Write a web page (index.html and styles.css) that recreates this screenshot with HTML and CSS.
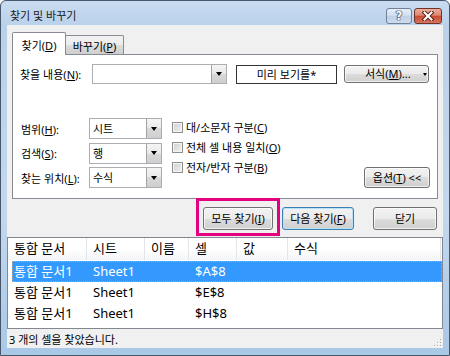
FILE: index.html
```html
<!DOCTYPE html>
<html lang="ko">
<head>
    <meta charset="UTF-8">
    <meta name="viewport" content="width=device-width, initial-scale=1.0">
    <title>찾기 및 바꾸기</title>
    <link rel="stylesheet" href="styles.css">
</head>
<body>
    <div class="window">
        <div class="titlebar">
            <span class="title">찾기 및 바꾸기</span>
            <div class="caption-buttons">
                <div class="cap-btn help">?</div>
                <div class="cap-btn close">
                    <svg width="14" height="10" viewBox="0 0 14 10">
                        <path d="M3.5 1.5 L10.5 8.5 M10.5 1.5 L3.5 8.5" stroke="#5b271d" stroke-width="4" stroke-linecap="square"/>
                        <path d="M3.5 1.5 L10.5 8.5 M10.5 1.5 L3.5 8.5" stroke="#fff" stroke-width="2" stroke-linecap="square"/>
                    </svg>
                </div>
            </div>
        </div>

        <div class="client">
            <div class="tabs">
                <div class="tab active">찾기(<u>D</u>)</div>
                <div class="tab">바꾸기(<u>P</u>)</div>
            </div>

            <div class="panel">
                <div class="find-row">
                    <span class="find-label">찾을 내용(<u>N</u>):</span>
                    <div class="combo find-combo"><span class="combo-text"></span><span class="combo-arrow"></span></div>
                    <div class="preview">미리 보기를*</div>
                    <button class="btn format-btn"><span>서식(<u>M</u>)...</span><span class="small-arrow"></span></button>
                </div>

                <div class="options">
                    <div class="option-fields">
                        <span>범위(<u>H</u>):</span>
                        <div class="combo"><span class="combo-text">시트</span><span class="combo-arrow"></span></div>
                        <span>검색(<u>S</u>):</span>
                        <div class="combo"><span class="combo-text">행</span><span class="combo-arrow"></span></div>
                        <span>찾는 위치(<u>L</u>):</span>
                        <div class="combo"><span class="combo-text">수식</span><span class="combo-arrow"></span></div>
                    </div>
                    <div class="checks">
                        <label class="check"><span class="box"></span><span>대/소문자 구분(<u>C</u>)</span></label>
                        <label class="check"><span class="box"></span><span>전체 셀 내용 일치(<u>O</u>)</span></label>
                        <label class="check"><span class="box"></span><span>전자/반자 구분(<u>B</u>)</span></label>
                    </div>
                    <button class="btn options-btn">옵션(<u>T</u>) &lt;&lt;</button>
                </div>
            </div>

            <div class="actions">
                <div class="highlight">
                    <button class="btn find-all">모두 찾기(<u>I</u>)</button>
                </div>
                <button class="btn default find-next">다음 찾기(<u>F</u>)</button>
                <button class="btn close-btn">닫기</button>
            </div>

            <div class="results">
                <div class="results-head">
                    <span>통합 문서</span>
                    <span>시트</span>
                    <span>이름</span>
                    <span>셀</span>
                    <span>값</span>
                    <span>수식</span>
                </div>
                <div class="result-row selected">
                    <span>통합 문서1</span><span>Sheet1</span><span></span><span>$A$8</span><span></span><span></span>
                </div>
                <div class="result-row">
                    <span>통합 문서1</span><span>Sheet1</span><span></span><span>$E$8</span><span></span><span></span>
                </div>
                <div class="result-row">
                    <span>통합 문서1</span><span>Sheet1</span><span></span><span>$H$8</span><span></span><span></span>
                </div>
            </div>

            <div class="status">
                3 개의 셀을 찾았습니다.
                <svg class="grip" width="10" height="10" viewBox="0 0 10 10">
                    <g fill="#fff">
                        <rect x="9" y="9" width="1" height="1"/><rect x="6" y="9" width="1" height="1"/><rect x="3" y="9" width="1" height="1"/>
                        <rect x="9" y="6" width="1" height="1"/><rect x="6" y="6" width="1" height="1"/><rect x="9" y="3" width="1" height="1"/>
                    </g>
                    <g fill="#a8a8a8">
                        <rect x="8" y="8" width="1" height="1"/><rect x="5" y="8" width="1" height="1"/><rect x="2" y="8" width="1" height="1"/>
                        <rect x="8" y="5" width="1" height="1"/><rect x="5" y="5" width="1" height="1"/><rect x="8" y="2" width="1" height="1"/>
                    </g>
                </svg>
            </div>
        </div>
    </div>
</body>
</html>
```

FILE: styles.css
```css
* {
    box-sizing: border-box;
}

body {
    margin: 0;
    font-family: "Noto Sans", "Noto Sans CJK KR", sans-serif;
    font-size: 11px;
    color: #000;
    background: #fff;
}

button {
    font: inherit;
    color: inherit;
    margin: 0;
    padding: 0;
}

u {
    text-underline-offset: 1px;
}

/* window frame */
.window {
    width: 450px;
    height: 356px;
    display: flex;
    flex-direction: column;
    padding: 0 6px 7px;
    border: 1px solid #46566b;
    border-radius: 6px 6px 0 0;
    background: linear-gradient(#c9dcf1, #bad1ea 24px, #c3d8ee 60%, #a9c8e6);
}

.titlebar {
    height: 24px;
    display: flex;
    justify-content: space-between;
    align-items: flex-start;
}

.title {
    padding: 7px 0 0 3px;
    line-height: 16px;
    color: #1b1b1b;
}

.caption-buttons {
    display: flex;
    gap: 2px;
    margin: 7px 1px 0 0;
}

.cap-btn {
    height: 16px;
    border-radius: 3px;
    display: flex;
    align-items: center;
    justify-content: center;
}

.cap-btn.help {
    width: 26px;
    border: 1px solid #6f8098;
    background: linear-gradient(#e6eef8, #d4e1f0 45%, #bfd1e7 50%, #cddcee);
    color: #fff;
    font: bold 12px "DejaVu Sans", sans-serif;
    text-shadow: 0 0 1px #22334d, 0 0 1px #22334d, 0 0 1px #22334d, 0 0 1px #22334d;
}

.cap-btn.close {
    width: 28px;
    border: 1px solid #6d3327;
    background: linear-gradient(#ecaea0, #df8670 45%, #c94a30 50%, #d6755d);
}

/* client area */
.client {
    flex: 1;
    display: flex;
    flex-direction: column;
    background: #f0f0f0;
    padding-top: 7px;
}

.tabs {
    display: flex;
    align-items: flex-end;
    height: 22px;
    margin: 0 5px;
    position: relative;
    z-index: 1;
}

.tab {
    height: 19px;
    padding-top: 3px;
    line-height: 16px;
    text-align: center;
    border: 1px solid #898c95;
    border-bottom: 0;
    border-radius: 2px 2px 0 0;
    background: linear-gradient(#f3f3f3, #ebebeb 50%, #dddddd 50%, #cfcfcf);
}

.tab.active {
    width: 54px;
    height: 23px;
    margin-bottom: -1px;
    padding-top: 5px;
    background: #fff;
    position: relative;
    z-index: 2;
}

.tab:not(.active) {
    width: 59px;
    margin-left: -1px;
}

.panel {
    height: 145px;
    margin: 0 5px;
    padding: 9px 0 0 7px;
    border: 1px solid #898c95;
    background: #fff;
}

.find-row {
    display: flex;
    align-items: center;
    height: 20px;
}

.find-label {
    width: 72px;
}

.combo {
    display: flex;
    width: 73px;
    height: 21px;
    border: 1px solid #abadb3;
    background: #fff;
}

.combo.find-combo {
    width: 135px;
    height: 20px;
}

.combo-text {
    flex: 1;
    padding-left: 3px;
    line-height: 19px;
}

.combo-arrow {
    width: 15px;
    display: flex;
    align-items: center;
    justify-content: center;
    border-left: 1px solid #a3a3a3;
    background: linear-gradient(#f4f4f4, #e8e8e8 50%, #d9d9d9 50%, #cfcfcf);
}

.combo-arrow::before {
    content: "";
    border-left: 3px solid transparent;
    border-right: 3px solid transparent;
    border-top: 4px solid #000;
}

.preview {
    width: 101px;
    height: 19px;
    margin-left: 9px;
    border: 1px solid #333;
    line-height: 17px;
    text-align: center;
}

.btn {
    border: 1px solid #707070;
    border-radius: 3px;
    background: linear-gradient(#f2f2f2, #ebebeb 50%, #dddddd 50%, #cfcfcf);
    box-shadow: inset 0 0 0 1px rgba(255, 255, 255, 0.7);
    line-height: 16px;
    text-align: center;
}

.format-btn {
    width: 85px;
    height: 18px;
    margin-left: 7px;
    display: flex;
    align-items: center;
    padding-left: 20px;
}

.small-arrow {
    margin-left: 12px;
    border-left: 2.5px solid transparent;
    border-right: 2.5px solid transparent;
    border-top: 3px solid #000;
}

.options {
    display: flex;
    align-items: flex-end;
    margin-top: 34px;
}

.option-fields {
    display: grid;
    grid-template-columns: 68px 73px;
    grid-auto-rows: 21px;
    row-gap: 3.5px;
    align-items: center;
    padding-left: 1px;
}

.checks {
    align-self: flex-start;
    display: flex;
    flex-direction: column;
    margin: -1px 0 0 10px;
}

.check {
    display: flex;
    align-items: center;
    gap: 3px;
    height: 20px;
}

.box {
    width: 11px;
    height: 11px;
    border: 1px solid #8e8f8f;
    background: linear-gradient(135deg, #cfcfcf, #f2f2f2);
    box-shadow: inset 0 0 0 1px #f4f4f4;
}

.options-btn {
    width: 66px;
    height: 21px;
    margin: 0 7px 0 auto;
}

/* dialog buttons */
.actions {
    display: flex;
    justify-content: flex-end;
    margin-top: 8px;
    padding-right: 6px;
}

.actions .btn {
    height: 23px;
}

.highlight {
    position: relative;
}

.highlight::after {
    content: "";
    position: absolute;
    top: -9px;
    bottom: -6px;
    left: -7px;
    right: -7px;
    border: 3px solid #e4007f;
}

.find-all {
    width: 70px;
}

.find-next {
    width: 72px;
    margin-left: 9px;
}

.btn.default {
    border-color: #3c7fb1;
    box-shadow: inset 0 0 0 1px #b6e2f8;
}

.close-btn {
    width: 64px;
    margin-left: 19px;
}

/* results list */
.results {
    height: 92px;
    margin-top: 7px;
    border: 1px solid #828790;
    background: #fff;
    font-size: 13px;
}

.results-head {
    display: grid;
    grid-template-columns: 79px 58px 44px 48px 51px 153px;
    height: 22px;
    line-height: 21px;
    background: linear-gradient(#fff, #fff 50%, #f4f5f7);
}

.results-head span {
    padding-left: 6px;
    border-right: 1px solid #e2e5ea;
}

.result-row {
    display: grid;
    grid-template-columns: 75px 58px 44px 48px 51px 153px;
    height: 21px;
    margin-left: 4px;
    line-height: 21px;
}

.result-row:nth-child(2) {
    margin-top: 1px;
}

.result-row span {
    padding-left: 6px;
    white-space: nowrap;
}

.result-row span:first-child {
    padding-left: 2px;
}

.result-row.selected {
    background: #3399ff;
    color: #fff;
    outline: 1px dotted #d9a35c;
    outline-offset: -1px;
}

.status {
    height: 19px;
    position: relative;
    padding: 3px 0 0 2px;
    line-height: 16px;
}

.grip {
    position: absolute;
    right: 1px;
    bottom: 1px;
}
```
